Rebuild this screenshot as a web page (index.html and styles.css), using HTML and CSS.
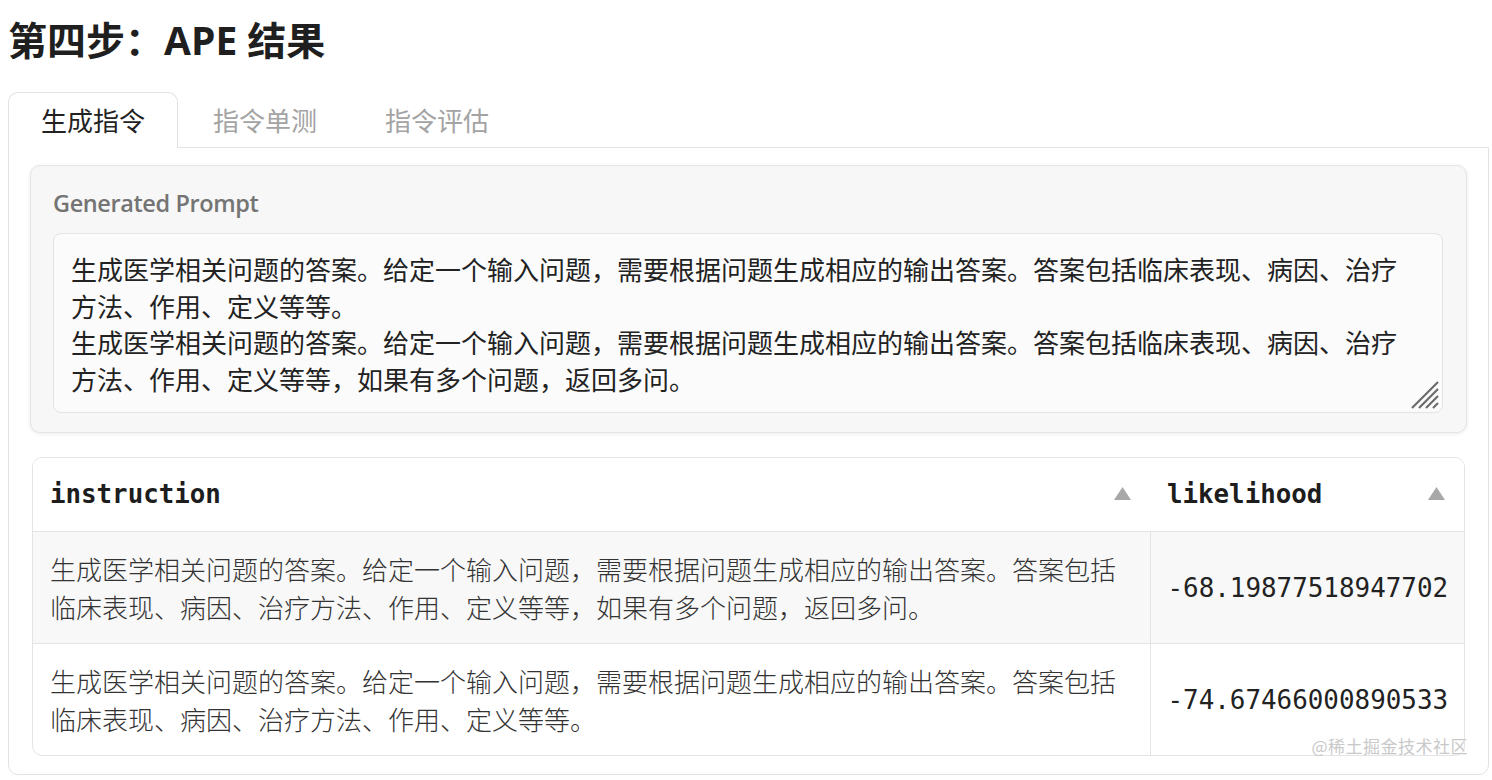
FILE: index.html
```html
<!DOCTYPE html>
<html lang="zh-CN">
<head>
    <meta charset="UTF-8">
    <meta name="viewport" content="width=device-width, initial-scale=1.0">
    <title>APE 结果</title>
    <link rel="stylesheet" href="styles.css">
</head>
<body>

    <h1 class="step-title">第四步：APE 结果</h1>

    <div class="tabs">
        <div class="tab-nav">
            <button class="tab active">生成指令</button>
            <button class="tab">指令单测</button>
            <button class="tab">指令评估</button>
        </div>

        <div class="tab-panel">
            <!-- generated prompt -->
            <div class="block">
                <label class="block-label" for="prompt">Generated Prompt</label>
                <div class="prompt-wrap">
                    <textarea id="prompt" class="prompt-box">生成医学相关问题的答案。给定一个输入问题，需要根据问题生成相应的输出答案。答案包括临床表现、病因、治疗方法、作用、定义等等。
生成医学相关问题的答案。给定一个输入问题，需要根据问题生成相应的输出答案。答案包括临床表现、病因、治疗方法、作用、定义等等，如果有多个问题，返回多问。</textarea>
                    <svg class="grip" width="30" height="30" viewBox="0 0 30 30">
                        <line x1="2" y1="28" x2="28" y2="2" />
                        <line x1="9" y1="28" x2="28" y2="9" />
                        <line x1="16" y1="28" x2="28" y2="16" />
                        <line x1="23" y1="28" x2="28" y2="23" />
                    </svg>
                </div>
            </div>

            <!-- results table -->
            <div class="table-wrap">
                <table class="results">
                    <colgroup>
                        <col class="col-instruction">
                        <col>
                    </colgroup>
                    <thead>
                        <tr>
                            <th>
                                <div class="th-inner">
                                    <span>instruction</span>
                                    <svg class="sort" width="17" height="13" viewBox="0 0 17 13"><polygon points="8.5,0 17,13 0,13" /></svg>
                                </div>
                            </th>
                            <th>
                                <div class="th-inner">
                                    <span>likelihood</span>
                                    <svg class="sort" width="17" height="13" viewBox="0 0 17 13"><polygon points="8.5,0 17,13 0,13" /></svg>
                                </div>
                            </th>
                        </tr>
                    </thead>
                    <tbody>
                        <tr>
                            <td class="text-cell">生成医学相关问题的答案。给定一个输入问题，需要根据问题生成相应的输出答案。答案包括临床表现、病因、治疗方法、作用、定义等等，如果有多个问题，返回多问。</td>
                            <td class="num-cell">-68.19877518947702</td>
                        </tr>
                        <tr>
                            <td class="text-cell">生成医学相关问题的答案。给定一个输入问题，需要根据问题生成相应的输出答案。答案包括临床表现、病因、治疗方法、作用、定义等等。</td>
                            <td class="num-cell">-74.67466000890533</td>
                        </tr>
                    </tbody>
                </table>
            </div>
        </div>
    </div>

    <div class="watermark">@稀土掘金技术社区</div>

</body>
</html>
```

FILE: styles.css
```css
body {
    margin: 0;
    padding: 0 3px 0 8px;
    font-family: "Open Sans", "Noto Sans CJK SC", sans-serif;
    color: #222;
    background: white;
    height: 780px;
    overflow: hidden;
    position: relative;
}
.step-title {
    margin: 0;
    padding-top: 16px;
    font-size: 39px;
    line-height: 47px;
    font-weight: bold;
    color: #1f1f1f;
}

/* Tabs */
.tabs {
    margin-top: 29px;
}
.tab-nav {
    display: flex;
}
.tab {
    font-family: "Noto Sans CJK SC", sans-serif;
    font-size: 26px;
    line-height: 54px;
    padding: 0 32px;
    background: none;
    border: 1px solid transparent;
    border-bottom: none;
    color: #a3a3a3;
    cursor: pointer;
    margin-right: 2px;
}
.tab.active {
    color: #222;
    background: white;
    border-color: #e2e2e2;
    border-radius: 10px 10px 0 0;
    margin-bottom: -1px;
    padding-bottom: 1px;
    position: relative;
    z-index: 1;
}
.tab-panel {
    border: 1px solid #e2e2e2;
    border-radius: 0 0 10px 10px;
    padding: 17px 21px 18px;
}

/* Generated prompt block */
.block {
    background: #f7f7f7;
    border: 1px solid #e4e4e4;
    border-radius: 10px;
    box-shadow: 0px 1px 4px rgba(0, 0, 0, 0.08);
    padding: 20px 23px 19px 22px;
}
.block-label {
    display: block;
    font-family: "Open Sans", sans-serif;
    font-size: 23.5px;
    font-weight: 600;
    line-height: 34px;
    color: #747474;
    margin-bottom: 13px;
    letter-spacing: -0.4px;
}
.prompt-wrap {
    position: relative;
}
.prompt-box {
    display: block;
    width: 100%;
    height: 180px;
    box-sizing: border-box;
    background: #fbfbfb;
    border: 1px solid #e4e4e4;
    border-radius: 8px;
    padding: 17px 30px 10px 17px;
    font-family: "Noto Sans CJK SC", sans-serif;
    font-size: 26px;
    line-height: 36.5px;
    color: #222;
    resize: none;
    outline: none;
    overflow: hidden;
}
.grip {
    position: absolute;
    right: 3px;
    bottom: 3px;
    stroke: #6a6a6a;
    stroke-width: 2.2;
}

/* Results table */
.table-wrap {
    margin: 24px 2px 0;
    border: 1px solid #e4e4e4;
    border-radius: 10px;
    overflow: hidden;
}
.results {
    width: 100%;
    border-collapse: collapse;
    table-layout: fixed;
}
.col-instruction {
    width: 1117px;
}
.results th {
    text-align: left;
    padding: 18px 19px 18px 17px;
    font-family: "DejaVu Sans Mono", monospace;
    font-size: 25.8px;
    font-weight: bold;
    line-height: 37px;
    color: #1d1d1d;
    border-bottom: 1px solid #e4e4e4;
    background: white;
}
.th-inner {
    display: flex;
    justify-content: space-between;
    align-items: center;
}
.sort {
    fill: #a8a8a8;
    margin-top: -2px;
}
.results td {
    border-top: 1px solid #e4e4e4;
    vertical-align: middle;
}
.results td + td {
    border-left: 1px solid #e4e4e4;
}
.results tbody tr:first-child td {
    border-top: none;
    background: #f8f8f8;
}
.text-cell {
    padding: 18px 18px 17px 17px;
    font-family: "Noto Sans CJK SC", serif;
    font-weight: 300;
    font-size: 26px;
    line-height: 38px;
    color: #333;
}
.num-cell {
    padding: 0 17px;
    font-family: "DejaVu Sans Mono", monospace;
    font-size: 25.9px;
    color: #222;
    white-space: nowrap;
}

/* Watermark */
.watermark {
    position: absolute;
    right: 24px;
    bottom: 22px;
    font-family: "Noto Sans CJK SC", sans-serif;
    font-size: 17px;
    color: #c9c9c9;
    letter-spacing: 0.5px;
}
```
